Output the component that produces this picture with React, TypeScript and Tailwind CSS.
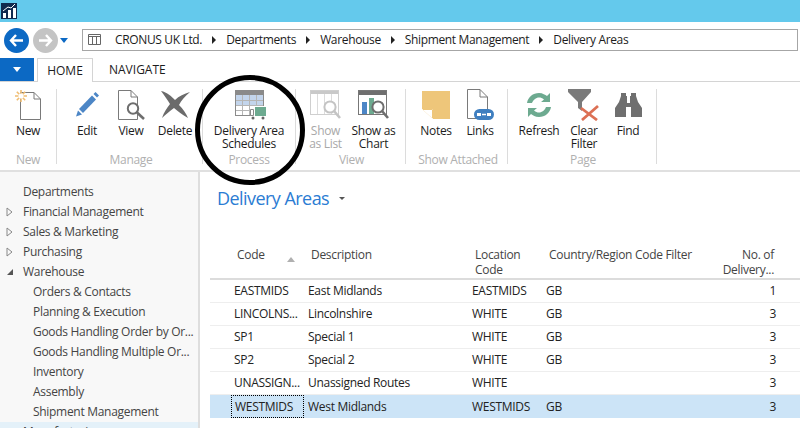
import React from 'react';

const font = { fontFamily: '"Open Sans", "Liberation Sans", sans-serif' };

// Ribbon icons
const NewIcon = () => (
    <svg width="27" height="30" viewBox="0 0 27 30" fill="none">
        <path d="M5.5 2.5H19L25.5 9V29.5H5.5Z" fill="#fff" stroke="#7a7a7a"/>
        <path d="M19 2.5V9H25.5" stroke="#7a7a7a"/>
        <g stroke="#f0bd72" strokeWidth="1.6">
            <path d="M6 0V12M0 6H12M1.8 1.8L10.2 10.2M10.2 1.8L1.8 10.2"/>
        </g>
        <circle cx="6" cy="6" r="2.6" fill="#fff"/>
    </svg>
);
const EditIcon = () => (
    <svg width="23" height="25" viewBox="0 0 23 25" fill="none">
        <path d="M3 17L16 3.5L20 7.5L7 21Z" fill="#4c86c6"/>
        <path d="M17.5 2L19.5 0L23 3.5L21 5.5Z" fill="#4c86c6"/>
        <path d="M0 24.5L2 18.5L6 22.5Z" fill="#4c86c6"/>
    </svg>
);
const ViewIcon = () => (
    <svg width="27" height="30" viewBox="0 0 27 30" fill="none">
        <path d="M.5 .5H13L19.5 7V29.5H.5Z" fill="#fff" stroke="#7a7a7a"/>
        <path d="M13 .5V7H19.5" stroke="#7a7a7a"/>
        <circle cx="15" cy="18.5" r="5.2" fill="#fff" stroke="#6e6e6e" strokeWidth="2"/>
        <path d="M19 22.5L26 29" stroke="#6e6e6e" strokeWidth="2.6"/>
    </svg>
);
const DeleteIcon = () => (
    <svg width="30" height="27" viewBox="0 0 30 27" fill="none">
        <path d="M1 0C7 1 12 6 15 9C19 5 24 3 30 1C25 5 21 10 19 14C23 18 26 22 28 27C22 24 18 20 14 17C10 20 6 23 2 27C4 21 7 17 10 13C7 8 4 4 1 0Z" fill="#6b6b6b"/>
    </svg>
);
const ScheduleIcon = () => (
    <svg width="32" height="30" viewBox="0 0 32 30" fill="none" className="ml-[3px]">
        <rect x="0.5" y="0.5" width="28" height="25" fill="#fff" stroke="#8a8a8a"/>
        <rect x="1" y="1" width="27" height="4" fill="#8a8a8a"/>
        <rect x="1" y="5" width="27" height="11" fill="#c3d5ec"/>
        <path d="M7.5 5V25M14.5 5V25M21.5 5V25M1 10.5H28M1 15.5H28M1 20.5H28" stroke="#b5b5b5"/>
        <rect x="17" y="16" width="15" height="11" fill="#fff"/>
        <rect x="20" y="17" width="11" height="9" fill="#6daa90"/>
        <path d="M15.5 19.5H18.5V25.5H15.5Z" stroke="#8a8a8a" fill="#fff"/>
        <circle cx="18" cy="28" r="1.5" fill="#666"/>
        <circle cx="28" cy="28" r="1.5" fill="#666"/>
    </svg>
);
const ShowListIcon = () => (
    <svg width="31" height="29" viewBox="0 0 31 29" fill="none">
        <rect x="0.5" y="0.5" width="28" height="24" fill="#fff" stroke="#cfcfcf"/>
        <rect x="1" y="1" width="27" height="3" fill="#c9c9c9"/>
        <path d="M7.5 4V24M14.5 4V24M21.5 4V24" stroke="#dcdcdc"/>
        <circle cx="20" cy="17" r="5.6" fill="#fff" stroke="#c4c4c4" strokeWidth="2"/>
        <path d="M24 21L30 28" stroke="#c4c4c4" strokeWidth="2.6"/>
    </svg>
);
const ShowChartIcon = () => (
    <svg width="31" height="29" viewBox="0 0 31 29" fill="none">
        <rect x="0.5" y="0.5" width="28" height="24" fill="#fff" stroke="#777"/>
        <rect x="1" y="1" width="27" height="4" fill="#6f6f6f"/>
        <rect x="4" y="12" width="5" height="12" fill="#4c86c6"/>
        <rect x="11" y="8" width="5" height="16" fill="#6daa90"/>
        <circle cx="20" cy="17" r="5.6" fill="#fff" stroke="#6e6e6e" strokeWidth="2"/>
        <path d="M24 21L30 28" stroke="#6e6e6e" strokeWidth="2.6"/>
    </svg>
);
const NotesIcon = () => (
    <svg width="28" height="28" viewBox="0 0 28 28" fill="none">
        <path d="M0 0H28V28H11L0 18Z" fill="#eec67a"/>
        <path d="M0 18L11 28V18Z" fill="#fff"/>
        <path d="M1 18.5H10.5V27" stroke="#eec67a"/>
    </svg>
);
const LinksIcon = () => (
    <svg width="27" height="31" viewBox="0 0 27 31" fill="none">
        <path d="M.5 .5H13L20.5 8V29.5H.5Z" fill="#fff" stroke="#7a7a7a"/>
        <path d="M13 .5V8H20.5" stroke="#7a7a7a"/>
        <rect x="7" y="20" width="20" height="11" rx="5.5" fill="#3f7fc0"/>
        <rect x="10" y="24" width="4" height="3" fill="#fff"/>
        <rect x="20" y="24" width="4" height="3" fill="#fff"/>
        <path d="M15 25.5H19" stroke="#fff" strokeWidth="1.5"/>
    </svg>
);
const RefreshIcon = () => (
    <svg width="26" height="26" viewBox="0 0 26 26" fill="none">
        <path d="M1 11C2 5 7 1 13 1C17 1 19 3 21 4L24 1V10H15L18 7.5C16 6 15 5.5 13 5.5C10 5.5 7 8 6 11Z" fill="#6daa90"/>
        <path d="M25 15C24 21 19 25 13 25C9 25 7 23 5 22L2 25V16H11L8 18.5C10 20 11 20.5 13 20.5C16 20.5 19 18 20 15Z" fill="#6daa90"/>
    </svg>
);
const ClearFilterIcon = () => (
    <svg width="32" height="32" viewBox="0 0 32 32" fill="none">
        <path d="M0 0H23V3L14 13V22L10 19V13L0 3Z" fill="#7a7a7a"/>
        <path d="M13 19L29 31M30 17L14 31" stroke="#dc7054" strokeWidth="2.8"/>
    </svg>
);
const FindIcon = () => (
    <svg width="27" height="24" viewBox="0 0 27 24" fill="none">
        <path d="M6 0H11V3H12V10H15V3H16V0H21V3L23 9L27 15V24H16V14H11V24H0V15L4 9L6 3Z" fill="#6f6f6f"/>
    </svg>
);

const RibbonButton = ({icon, label, width, disabled}: { icon: React.ReactNode; label: string[]; width: number; disabled?: boolean }) => (
    <div className="flex flex-col items-center" style={{width}}>
        <div className="flex h-[31px] items-center justify-center">{icon}</div>
        <div className={`mt-[4px] text-center leading-[13px] ${disabled ? 'text-[#a8a8a8]' : 'text-[#1c1c1c]'}`}>
            {label.map((l) => <div key={l} className="whitespace-nowrap">{l}</div>)}
        </div>
    </div>
);

const RibbonGroup = ({title, className, children}: { title: string; className: string; children: React.ReactNode }) => (
    <div className={`h-[75px] border-r border-[#dcdcdc] ${className}`}>
        <div className="flex h-[64px] justify-center">{children}</div>
        <div className="text-center leading-[14px] text-[#b0b0b0]">{title}</div>
    </div>
);

const navItems = [
    {label: 'Financial Management', arrow: 'closed'},
    {label: 'Sales & Marketing', arrow: 'closed'},
    {label: 'Purchasing', arrow: 'closed'},
    {label: 'Warehouse', arrow: 'open'},
];

const subItems = [
    'Orders & Contacts',
    'Planning & Execution',
    'Goods Handling Order by Or...',
    'Goods Handling Multiple Or...',
    'Inventory',
    'Assembly',
    'Shipment Management',
];

const rows = [
    {code: 'EASTMIDS', description: 'East Midlands', location: 'EASTMIDS', country: 'GB', count: '1'},
    {code: 'LINCOLNS...', description: 'Lincolnshire', location: 'WHITE', country: 'GB', count: '3'},
    {code: 'SP1', description: 'Special 1', location: 'WHITE', country: 'GB', count: '3'},
    {code: 'SP2', description: 'Special 2', location: 'WHITE', country: 'GB', count: '3'},
    {code: 'UNASSIGN...', description: 'Unassigned Routes', location: 'WHITE', country: '', count: '3'},
    {code: 'WESTMIDS', description: 'West Midlands', location: 'WESTMIDS', country: 'GB', count: '3'},
];

const crumbs = ['Departments', 'Warehouse', 'Shipment Management', 'Delivery Areas'];

const gridCols = 'grid grid-cols-[21px_73px_165px_74px_1fr_60px] ';

const App: React.FC = () => {
    return (
        <div className="relative h-[428px] w-[800px] overflow-hidden bg-white text-[12px] tracking-[-0.3px]" style={font}>
            {/* Title bar */}
            <div className="flex h-[22px] items-center bg-[#64c9ec] pl-[1px]">
                <div className="h-[16px] w-[16px] bg-[#10294f]">
                    <svg width="16" height="16" viewBox="0 0 16 16" fill="none">
                        <path d="M2 15V10H5V15ZM7 15V7H10V15ZM12 15V5H15V15Z" fill="#fff"/>
                        <path d="M2 8L7 4L10 5L14 1" stroke="#fff"/>
                    </svg>
                </div>
            </div>

            {/* Navigation row */}
            <div className="flex h-[36px] items-center pl-[4px] pr-[2px]">
                <div className="flex h-[25px] w-[25px] items-center justify-center rounded-full bg-[#0c69c4]">
                    <svg width="15" height="13" viewBox="0 0 15 13" fill="none">
                        <path d="M7 1L2 6.5L7 12M2 6.5H14" stroke="#fff" strokeWidth="2.4"/>
                    </svg>
                </div>
                <div className="ml-[4px] flex h-[25px] w-[25px] items-center justify-center rounded-full bg-[#c4c4c4]">
                    <svg width="15" height="13" viewBox="0 0 15 13" fill="none">
                        <path d="M8 1L13 6.5L8 12M13 6.5H1" stroke="#fff" strokeWidth="2.4"/>
                    </svg>
                </div>
                <div className="ml-[2px] h-0 w-0 border-x-[4.5px] border-t-[5px] border-x-transparent border-t-[#0c69c4]"/>
                <div className="ml-[14px] flex h-[22px] flex-1 items-center border border-[#a6a6a6] pl-[4px] tracking-[-0.35px] text-[#1c1c1c]">
                    <svg width="14" height="12" viewBox="0 0 14 12" fill="none" className="ml-[1px] mr-[13px]">
                        <path d="M.5 .5H12.5V10.5H.5ZM.5 2.5H12.5M4.5 2.5V10.5M8.5 2.5V10.5" stroke="#666"/>
                    </svg>
                    <span>CRONUS UK Ltd.</span>
                    {crumbs.map((c) => (
                        <React.Fragment key={c}>
                            <span className="mx-[10px] h-0 w-0 border-y-[4px] border-l-[4px] border-y-transparent border-l-[#222]"/>
                            <span>{c}</span>
                        </React.Fragment>
                    ))}
                </div>
            </div>

            {/* Tab row */}
            <div className="flex h-[24px] items-end border-b border-[#d4d4d4] tracking-normal">
                <div className="flex h-[23px] w-[34px] items-center justify-center bg-[#0c69c4]">
                    <div className="h-0 w-0 border-x-[4.5px] border-t-[5px] border-x-transparent border-t-white"/>
                </div>
                <div className="relative top-[1px] ml-[3px] flex h-[24px] w-[56px] items-center justify-center border border-b-0 border-[#d4d4d4] bg-white text-[#1c1c1c]">HOME</div>
                <div className="ml-[16px] flex h-[23px] items-center text-[#1c1c1c]">NAVIGATE</div>
            </div>

            {/* Ribbon */}
            <div className="flex h-[90px] border-b-2 border-[#e0e0e0] pt-[7px]">
                <RibbonGroup title="New" className="w-[57px]">
                    <RibbonButton width={48} icon={<NewIcon/>} label={['New']}/>
                </RibbonGroup>
                <RibbonGroup title="Manage" className="w-[146px] pl-[3px]">
                    <RibbonButton width={44} icon={<EditIcon/>} label={['Edit']}/>
                    <RibbonButton width={44} icon={<ViewIcon/>} label={['View']}/>
                    <RibbonButton width={44} icon={<DeleteIcon/>} label={['Delete']}/>
                </RibbonGroup>
                <RibbonGroup title="Process" className="w-[93px]">
                    <RibbonButton width={84} icon={<ScheduleIcon/>} label={['Delivery Area', 'Schedules']}/>
                </RibbonGroup>
                <RibbonGroup title="View" className="w-[110px] pl-[2px]">
                    <RibbonButton width={44} disabled icon={<ShowListIcon/>} label={['Show', 'as List']}/>
                    <RibbonButton width={52} icon={<ShowChartIcon/>} label={['Show as', 'Chart']}/>
                </RibbonGroup>
                <RibbonGroup title="Show Attached" className="w-[102px] pl-[3px]">
                    <RibbonButton width={44} icon={<NotesIcon/>} label={['Notes']}/>
                    <RibbonButton width={44} icon={<LinksIcon/>} label={['Links']}/>
                </RibbonGroup>
                <RibbonGroup title="Page" className="w-[149px] pl-[2px]">
                    <RibbonButton width={46} icon={<RefreshIcon/>} label={['Refresh']}/>
                    <RibbonButton width={44} icon={<ClearFilterIcon/>} label={['Clear', 'Filter']}/>
                    <RibbonButton width={44} icon={<FindIcon/>} label={['Find']}/>
                </RibbonGroup>
            </div>

            <div className="flex">
                {/* Sidebar */}
                <div className="h-[256px] w-[200px] shrink-0 border-r-2 border-[#dedede] bg-[#f8f8f8] pt-[10px] text-[#444]">
                    <div className="flex h-[20px] items-center pl-[23px]">Departments</div>
                    {navItems.map((item) => (
                        <div key={item.label} className="flex h-[20px] items-center">
                            <div className="flex w-[23px] justify-center pr-[4px]">
                                {item.arrow === 'closed' ? (
                                    <svg width="7" height="10" viewBox="0 0 7 10" fill="none"><path d="M1 1L6 5L1 9Z" stroke="#888"/></svg>
                                ) : (
                                    <svg width="8" height="8" viewBox="0 0 8 8"><path d="M7 1V7H1Z" fill="#555"/></svg>
                                )}
                            </div>
                            {item.label}
                        </div>
                    ))}
                    {subItems.map((s) => (
                        <div key={s} className="flex h-[20px] items-center whitespace-nowrap pl-[33px]">{s}</div>
                    ))}
                    <div className="flex h-[20px] items-center bg-[#e4f1f9] pl-[23px]">Manufacturing</div>
                </div>

                {/* Content */}
                <div className="min-w-0 flex-1">
                    <div className="flex h-[39px] items-end pl-[17px]">
                        <span className="text-[18px] leading-[26px] tracking-[-0.55px] text-[#2b7cd3]">Delivery Areas</span>
                        <span className="mb-[11px] ml-[10px] h-0 w-0 border-x-[3px] border-t-[3px] border-x-transparent border-t-[#555]"/>
                    </div>
                    <div className="ml-[10px] mt-[29px]">
                        <div className={gridCols + 'h-[40px] border-b-2 border-[#dcdcdc] pr-[26px] pt-[7px] leading-[15px] text-[#444]'}>
                            <div/>
                            <div className="relative pl-[6px]">
                                Code
                                <span className="absolute left-[56px] top-[10px] h-0 w-0 border-x-[4.5px] border-b-[5px] border-x-transparent border-b-[#b0b0b0]"/>
                            </div>
                            <div className="pl-[7px]">Description</div>
                            <div className="pl-[6px]">Location<br/>Code</div>
                            <div className="whitespace-nowrap pl-[6px]">Country/Region Code Filter</div>
                            <div className="whitespace-nowrap text-right">No. of<br/>Delivery...</div>
                        </div>
                        {rows.map((row) => {
                            const selected = row.code === 'WESTMIDS';
                            return (
                                <div key={row.code} className={gridCols + `h-[23px] items-center pr-[24px] text-[#222] ${selected ? 'bg-[#cce4f7]' : 'border-b border-[#eeeeee]'}`}>
                                    <div/>
                                    <div className={`flex h-full items-center whitespace-nowrap pl-[3px] ${selected ? 'border border-dotted border-black pl-[2px]' : ''}`}>{row.code}</div>
                                    <div className="pl-[4px]">{row.description}</div>
                                    <div className="pl-[3px]">{row.location}</div>
                                    <div className="pl-[3px]">{row.country}</div>
                                    <div className="text-right">{row.count}</div>
                                </div>
                            );
                        })}
                    </div>
                </div>
            </div>

            {/* Hand-drawn circle over the ribbon */}
            <div className="absolute left-[195px] top-[75px] h-[110px] w-[110px] rounded-full border-[5px] border-black"/>
        </div>
    );
};

export default App;
